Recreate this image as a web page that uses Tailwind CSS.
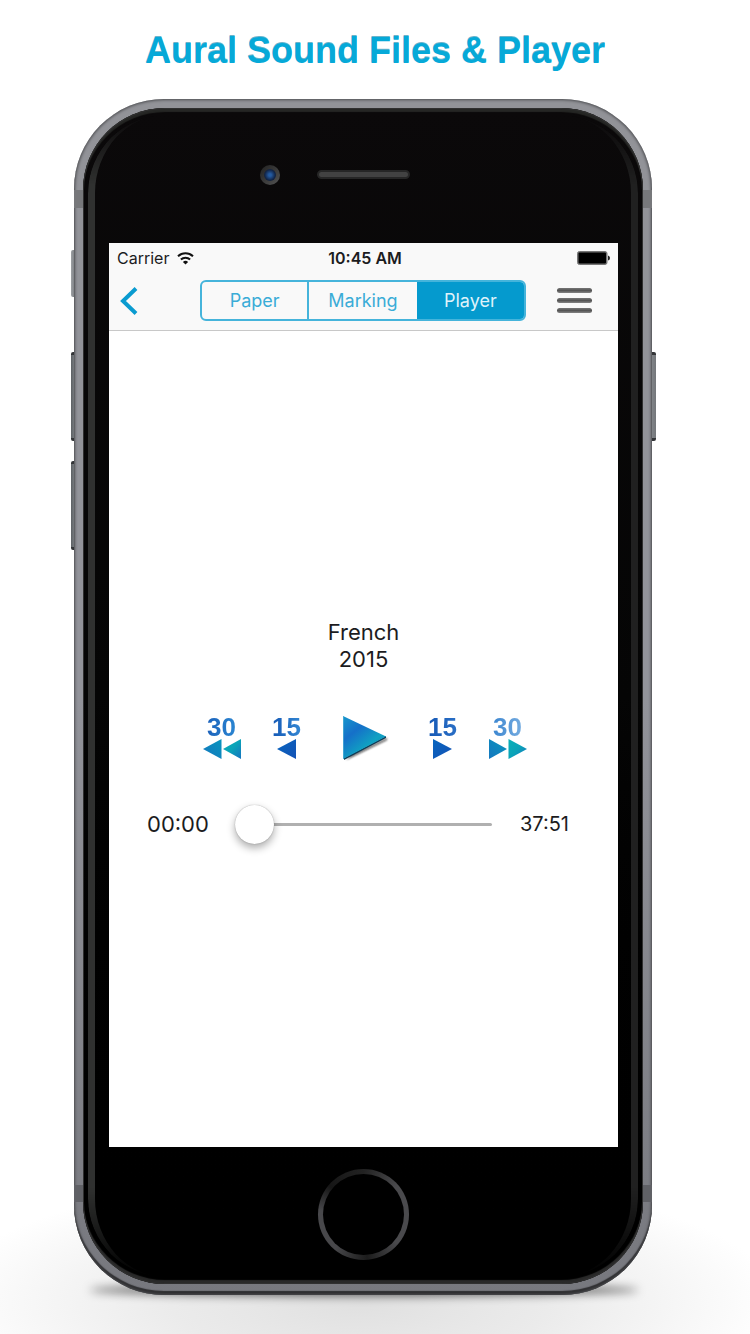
<!DOCTYPE html>
<html lang="en">
<head>
<meta charset="utf-8">
<meta name="viewport" content="width=device-width, initial-scale=1">
<title>Aural Sound Files &amp; Player</title>
<script src="https://cdn.jsdelivr.net/npm/@tailwindcss/browser@4"></script>
</head>
<body class="relative flex min-h-screen flex-col overflow-x-hidden bg-white pr-[98px] pb-[39px] pl-[74px] font-['Inter','Liberation_Sans',sans-serif] text-[#1c1c1e]">
  <!-- floor shading -->
  <div class="absolute inset-x-0 bottom-0 h-[154px] bg-[radial-gradient(ellipse_56%_85%_at_48%_80%,#e0e0e0_0%,#ebebeb_45%,#f6f6f6_75%,#ffffff_100%)]"></div>
  <div class="absolute right-[112px] bottom-[38px] left-[90px] h-[12px] rounded-[50%] bg-black/60 blur-[5px]"></div>

  <h1 class="-mr-[98px] -ml-[74px] flex h-[99px] items-center justify-center pt-[3px] font-['Liberation_Sans',sans-serif] text-4xl font-bold text-[#06a9d8] [text-shadow:0_-1px_0_#0782a899]">Aural Sound Files &amp; Player</h1>

  <div class="relative flex flex-1 flex-col">
    <!-- side keys -->
    <span class="absolute top-[151px] -left-[3px] h-[47px] w-2 rounded-xs bg-linear-to-r from-[#9da0a4] to-[#55585c]"></span>
    <span class="absolute top-[253px] -left-[3px] h-[89px] w-2 rounded-xs border-y-3 border-[#333538] bg-linear-to-r from-[#5c6064] to-[#a2a6aa]"></span>
    <span class="absolute top-[362px] -left-[3px] h-[89px] w-2 rounded-xs border-y-3 border-[#333538] bg-linear-to-r from-[#5c6064] to-[#a2a6aa]"></span>
    <span class="absolute top-[253px] -right-[4px] h-[89px] w-2 rounded-xs border-y-3 border-[#333538] bg-linear-to-r from-[#8d9195] to-[#74777b]"></span>

    <!-- metal shell -->
    <div class="relative flex flex-1 flex-col overflow-hidden rounded-[90px] bg-linear-to-b from-[#929398] via-[#92939a] to-[#77787e] px-[9px] pt-[9px] pb-[11px] shadow-[inset_0_0_3px_1px_#4c4d50,inset_0_-4px_1px_#2c2c2e]">
      <span class="absolute top-[91px] left-0 h-[18px] w-[9px] bg-[#77787b]"></span>
      <span class="absolute top-[91px] right-0 h-[18px] w-[9px] bg-[#77787b]"></span>
      <span class="absolute bottom-[93px] left-0 h-[17px] w-[9px] bg-[#606166]"></span>
      <span class="absolute right-0 bottom-[93px] h-[17px] w-[9px] bg-[#606166]"></span>

      <div class="relative flex flex-1 flex-col rounded-[82px] bg-linear-to-b from-[#0b090a] via-[#050505] to-black pr-[25px] pl-[26px] shadow-[inset_0_0_0_1px_#303030,inset_0_4px_1px_#252624,inset_0_-4px_1px_#292929]">
        <div class="pointer-events-none absolute inset-x-[5px] inset-y-[7px] rounded-[78px] border-x-[7px] border-r-[#202020] border-l-[#303130] mask-[linear-gradient(transparent,#000_70px,#000_calc(100%-90px),transparent)]"></div>

        <!-- camera and speaker -->
        <div class="grid h-[135px] grid-cols-[1fr_auto_1fr] items-center pb-[2px]">
          <span class="mr-[37px] flex size-5 items-center justify-center justify-self-end rounded-full bg-linear-to-br from-[#202020] to-[#555] p-1">
            <span class="size-3 rounded-full bg-[radial-gradient(circle,#245aa0_15%,#12264a_60%,#1c1c1e_90%)]"></span>
          </span>
          <span class="h-[9px] w-[93px] rounded-full border-2 border-[#262626] bg-[#424242]"></span>
        </div>

        <!-- display -->
        <div class="flex flex-1 flex-col bg-white">
          <header class="border-b border-[#c8c8c8] bg-[#f9f9f9]">
            <div class="grid h-[30px] grid-cols-[1fr_auto_1fr] items-center px-2 text-base">
              <div class="flex items-center gap-2">
                <span>Carrier</span>
                <svg class="h-[13px] w-[17px]" viewBox="0 0 17 13" fill="none" stroke="#111" stroke-width="2" aria-label="Wi-Fi">
                  <path d="M1 4.300a10.800 10.800 0 0 1 15 0M3.900 7.500a6.600 6.600 0 0 1 9.200 0"/>
                  <path d="M8.500 12.500 5.900 10a3.700 3.700 0 0 1 5.200 0z" fill="#111" stroke="none"/>
                </svg>
              </div>
              <span class="pl-[3px] font-semibold">10:45 AM</span>
              <svg class="h-[14px] w-[33px] justify-self-end" viewBox="0 0 33 14" aria-label="Battery">
                <rect x=".5" y=".5" width="29.500" height="13" rx="2" fill="#777" stroke="#777"/>
                <rect x="1.500" y="1.500" width="27.500" height="11" rx="1" fill="#000"/>
                <path d="M31 4.500q2 .5 2 2.500t-2 2.500z" fill="#222"/>
              </svg>
            </div>
            <nav class="flex h-[57px] items-center pr-[26px] pb-[2px] pl-[11px]">
              <button type="button" aria-label="Back" class="flex h-10 w-[18px] items-center">
                <svg class="h-[28px] w-[18px]" viewBox="0 0 18 28" fill="none" stroke="#0a9bd0" stroke-width="4"><path d="M16 1.500 3 14l13 12.500"/></svg>
              </button>
              <div class="mr-[31px] ml-[62px] grid h-[41px] flex-1 grid-cols-3 overflow-hidden rounded-md border-2 border-[#45b4db] text-lg text-[#3aacd7]">
                <button type="button" class="border-r-2 border-[#45b4db] pt-px">Paper</button>
                <button type="button" class="pt-px">Marking</button>
                <button type="button" class="bg-[#059ace] pt-px text-[#dff2fa]" aria-pressed="true">Player</button>
              </div>
              <button type="button" aria-label="Menu" class="flex h-10 flex-col justify-center gap-[5px]">
                <span class="h-[5px] w-[35px] rounded-full bg-linear-to-b from-[#777] via-[#555] to-[#858585]"></span>
                <span class="h-[5px] w-[35px] rounded-full bg-linear-to-b from-[#777] via-[#555] to-[#858585]"></span>
                <span class="h-[5px] w-[35px] rounded-full bg-linear-to-b from-[#777] via-[#555] to-[#858585]"></span>
              </button>
            </nav>
          </header>

          <main class="flex flex-1 flex-col justify-center pb-4">
            <p class="text-center text-[22px] leading-[27px]">French<br>2015</p>

            <svg class="absolute size-0" aria-hidden="true">
              <defs>
                <linearGradient id="teal" x1="0" y1="1" x2="1" y2="0"><stop offset="0" stop-color="#1577bf"/><stop offset="1" stop-color="#0895bd"/></linearGradient>
                <linearGradient id="tealLight" x1="0" y1="0" x2="1" y2="1"><stop offset="0" stop-color="#09b0b8"/><stop offset=".5" stop-color="#0aa3b8"/><stop offset="1" stop-color="#1673c0"/></linearGradient>
                <linearGradient id="blue" x1="0" y1="0" x2="1" y2="1"><stop offset="0" stop-color="#0866bf"/><stop offset="1" stop-color="#1452b5"/></linearGradient>
                <linearGradient id="play" x1="0" y1="0" x2=".8" y2="1"><stop offset="0" stop-color="#1597cc"/><stop offset=".35" stop-color="#1570c9"/><stop offset=".7" stop-color="#10a2c2"/><stop offset="1" stop-color="#1277bd"/></linearGradient>
                <filter id="soft" x="-20%" y="-20%" width="150%" height="150%"><feGaussianBlur stdDeviation="1.2"/></filter>
              </defs>
            </svg>
            <div class="mt-[42px] flex items-center justify-center gap-8 pl-[2px] font-['Liberation_Sans',sans-serif] text-[26px] leading-[22px] font-bold">
              <button type="button" aria-label="Back 30 seconds" class="flex w-[38px] flex-col items-center">
                <span class="bg-linear-to-r from-[#1c62bb] to-[#2b86d2] bg-clip-text text-transparent">30</span>
                <svg class="h-[22px] w-[38px]" viewBox="0 0 38 22"><path d="M0 11 18.500 1v20z" fill="url(#teal)"/><path d="M20 11 38 1v20z" fill="url(#tealLight)"/></svg>
              </button>
              <button type="button" aria-label="Back 15 seconds" class="flex w-7 flex-col items-center">
                <span class="bg-linear-to-r from-[#1458b5] to-[#3487d3] bg-clip-text text-transparent">15</span>
                <svg class="h-[22px] w-[19px]" viewBox="0 0 19 22"><path d="M0 11 19 1v20z" fill="url(#blue)"/></svg>
              </button>
              <button type="button" aria-label="Play" class="mx-[10px]">
                <svg class="h-[45px] w-11 overflow-visible" viewBox="0 0 44 45"><path d="M3 45 44 25v-2L8 40z" fill="#111" opacity=".75" filter="url(#soft)"/><path d="M1 43v2L43 23v-2z" fill="#123c55"/><path d="M0 1v43l43-22.500z" fill="url(#play)"/><path d="M.5 1v43" stroke="#54b3d8" opacity=".7"/></svg>
              </button>
              <button type="button" aria-label="Forward 15 seconds" class="flex w-7 flex-col items-center">
                <span class="bg-linear-to-r from-[#1458b5] to-[#2a6fc6] bg-clip-text text-transparent">15</span>
                <svg class="h-[22px] w-[19px]" viewBox="0 0 19 22"><path d="M19 11 0 1v20z" fill="url(#blue)"/></svg>
              </button>
              <button type="button" aria-label="Forward 30 seconds" class="flex w-[38px] flex-col items-center">
                <span class="bg-linear-to-r from-[#3b86d0] to-[#75ace0] bg-clip-text text-transparent">30</span>
                <svg class="h-[22px] w-[38px]" viewBox="0 0 38 22"><path d="M18 11 0 1v20z" fill="url(#teal)"/><path d="M38 11 19.500 1v20z" fill="url(#tealLight)"/></svg>
              </button>
            </div>

            <div class="mt-[45px] flex items-center gap-[26px] pr-[49px] pl-[38px]">
              <label for="seek" class="text-[22px] leading-[38px]">00:00</label>
              <input id="seek" type="range" min="0" max="2271" value="0" class="mr-[2px] h-[38px] min-w-0 flex-1 appearance-none bg-transparent [&::-webkit-slider-runnable-track]:h-[3px] [&::-webkit-slider-runnable-track]:rounded-full [&::-webkit-slider-runnable-track]:bg-[#b0b0b0] [&::-webkit-slider-thumb]:-mt-[18px] [&::-webkit-slider-thumb]:size-[39px] [&::-webkit-slider-thumb]:appearance-none [&::-webkit-slider-thumb]:rounded-full [&::-webkit-slider-thumb]:bg-white [&::-webkit-slider-thumb]:shadow-[0_0_1px_#0006,0_4px_8px_#0005]">
              <span class="text-xl">37:51</span>
            </div>
          </main>
        </div>

        <!-- home button -->
        <div class="flex h-[137px] items-center justify-center pr-px pb-[2px]">
          <button type="button" aria-label="Home" class="size-[91px] rounded-full bg-[conic-gradient(#222_0deg,#4a4a4d_50deg,#4a4a4d_130deg,#1c1c1c_175deg,#48484b_220deg,#48484b_275deg,#161616_310deg,#222_360deg)] p-[5px]"><span class="block size-full rounded-full bg-black"></span></button>
        </div>
      </div>
    </div>
  </div>
</body>
</html>
